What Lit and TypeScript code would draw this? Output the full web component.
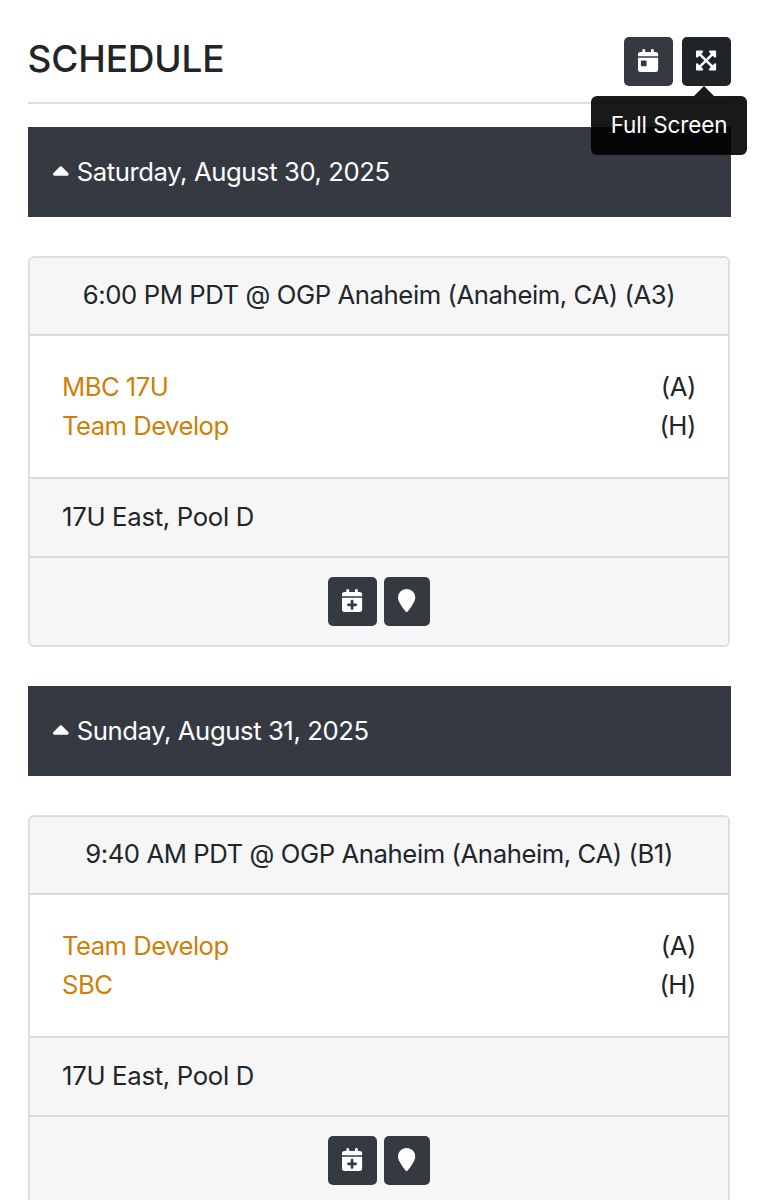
import { LitElement, html, css, svg } from "lit";
import { customElement, property } from "lit/decorators.js";

const ICONS = {
  day: { w: 448, d: "M128 0c17.7 0 32 14.3 32 32V64H288V32c0-17.7 14.3-32 32-32s32 14.3 32 32V64h48c26.5 0 48 21.5 48 48v48H0V112C0 85.5 21.5 64 48 64H96V32c0-17.7 14.3-32 32-32zM0 192H448V464c0 26.5-21.5 48-48 48H48c-26.5 0-48-21.5-48-48V192zm80 64c-8.8 0-16 7.2-16 16v96c0 8.8 7.2 16 16 16h96c8.8 0 16-7.2 16-16V272c0-8.8-7.2-16-16-16H80z" },
  plus: { w: 448, d: "M96 32V64H48C21.5 64 0 85.5 0 112v48H448V112c0-26.5-21.5-48-48-48H352V32c0-17.7-14.3-32-32-32s-32 14.3-32 32V64H160V32c0-17.7-14.3-32-32-32S96 14.3 96 32zM448 192H0V464c0 26.5 21.5 48 48 48H400c26.5 0 48-21.5 48-48V192zM224 242c17 0 30 12 30 28v52h52c16 0 28 13 28 30s-12 30-28 30H254v52c0 16-13 28-30 28s-30-12-30-28V382H142c-16 0-28-13-28-30s12-30 28-30h52V270c0-16 13-28 30-28z" },
  pin: { w: 384, d: "M384 192c0 87.4-117 243-168.3 307.2c-12.3 15.3-35.1 15.3-47.4 0C117 435 0 279.4 0 192C0 86 86 0 192 0S384 86 384 192z" },
  expand: { w: 448, d: "M448 344v112a23.94 23.94 0 0 1-24 24H312c-21.39 0-32.09-25.9-17-41l36.2-36.2L224 295.6 116.77 402.9 153 439c15.09 15.1 4.39 41-17 41H24a23.94 23.94 0 0 1-24-24V344c0-21.4 25.89-32.1 41-17l36.19 36.2L184.46 256 77.18 148.7 41 185c-15.1 15.1-41 4.4-41-17V56a23.94 23.94 0 0 1 24-24h112c21.39 0 32.09 25.9 17 41l-36.2 36.2L224 216.4l107.23-107.3L295 73c-15.09-15.1-4.39-41 17-41h112a23.94 23.94 0 0 1 24 24v112c0 21.4-25.89 32.1-41 17l-36.19-36.2L263.54 256l107.28 107.3L407 327.1c15.1-15.2 41-4.5 41 16.9z" },
  caret: { w: 320, d: "M182.6 137.4c-12.5-12.5-32.8-12.5-45.3 0l-128 128c-9.2 9.2-11.9 22.9-6.9 34.9s16.6 19.8 29.6 19.8H288c12.9 0 24.6-7.8 29.6-19.8s2.2-25.7-6.9-34.9l-128-128z" },
};

const icon = (name: keyof typeof ICONS) =>
  html`<svg class="icon" viewBox="0 0 ${ICONS[name].w} 512" aria-hidden="true">${svg`<path fill="currentColor" d=${ICONS[name].d}></path>`}</svg>`;

const buttonStyles = css`
  .icon { display: block; height: 23px; width: auto; }
  .btn {
    box-sizing: border-box;
    display: flex;
    justify-content: center;
    width: 49px;
    height: 49px;
    margin: 0;
    padding: 12px 0 0;
    border: 0;
    border-radius: 5px;
    background: #343a40;
    color: #fff;
  }
`;

interface Game {
  date: string;
  title: string;
  teams: { name: string; side: string }[];
  pool: string;
}

const GAMES: Game[] = [
  {
    date: "Saturday, August 30, 2025",
    title: "6:00 PM PDT @ OGP Anaheim (Anaheim, CA) (A3)",
    teams: [{ name: "MBC 17U", side: "(A)" }, { name: "Team Develop", side: "(H)" }],
    pool: "17U East, Pool D",
  },
  {
    date: "Sunday, August 31, 2025",
    title: "9:40 AM PDT @ OGP Anaheim (Anaheim, CA) (B1)",
    teams: [{ name: "Team Develop", side: "(A)" }, { name: "SBC", side: "(H)" }],
    pool: "17U East, Pool D",
  },
];

@customElement("schedule-day")
export class ScheduleDay extends LitElement {
  @property({ attribute: false }) game!: Game;

  static styles = [
    buttonStyles,
    css`
      :host { display: block; }
      .date {
        box-sizing: border-box;
        display: flex;
        align-items: center;
        gap: 8px;
        height: 90px;
        margin-bottom: 39px;
        padding-left: 25px;
        background: #353941;
        color: #fff;
        white-space: nowrap;
      }
      .date .icon { height: 25px; margin-top: 1px; }
      .card {
        box-sizing: border-box;
        height: 391px;
        margin-right: 1px;
        border: 2px solid #dedede;
        border-radius: 6px;
        background: #fff;
        overflow: hidden;
      }
      .head, .foot, .actions { box-sizing: border-box; background: #f6f6f6; }
      .head {
        height: 78px;
        padding-top: 18px;
        border-bottom: 2px solid #dadada;
        text-align: center;
        white-space: nowrap;
      }
      .body { box-sizing: border-box; height: 141px; padding: 32px 32px 0; }
      .team { display: flex; justify-content: space-between; }
      .link { color: #cf7f08; text-decoration: none; letter-spacing: -0.55px; }
      .foot { height: 79px; padding: 19px 32px 0; border-top: 2px solid #dadada; letter-spacing: -0.3px; }
      .actions {
        display: flex;
        justify-content: center;
        gap: 7px;
        height: 89px;
        padding-top: 19px;
        border-top: 2px solid #dadada;
      }
      .pin { width: 46px; }
    `,
  ];

  render() {
    const g = this.game;
    return html`
      <div class="date">${icon("caret")}<span>${g.date}</span></div>
      <div class="card">
        <div class="head">${g.title}</div>
        <div class="body">
          ${g.teams.map((t) => html`<div class="team"><a class="link">${t.name}</a><span>${t.side}</span></div>`)}
        </div>
        <div class="foot">${g.pool}</div>
        <div class="actions">
          <button class="btn" aria-label="Add to calendar">${icon("plus")}</button>
          <button class="btn pin" aria-label="Location">${icon("pin")}</button>
        </div>
      </div>
    `;
  }
}

@customElement("app-root")
export class AppRoot extends LitElement {
  static styles = [
    buttonStyles,
    css`
      :host {
        box-sizing: border-box;
        display: block;
        height: 1200px;
        padding: 37px 27px 0 28px;
        overflow: hidden;
        background: #fff;
        color: #212529;
        font: 370 25.7px/38.5px Inter, "Liberation Sans", sans-serif;
        letter-spacing: -0.42px;
      }
      .top {
        box-sizing: border-box;
        display: flex;
        justify-content: space-between;
        height: 67px;
        border-bottom: 2px solid #e0e0e0;
        margin-bottom: 23px;
      }
      .title { margin: 0 0 0 -0.5px; font-size: 37px; font-weight: 480; line-height: 43px; letter-spacing: -0.15px; }
      .tools { display: flex; gap: 9px; }
      .anchor { position: relative; }
      .active { background: #202328; }
      .tip {
        position: absolute;
        z-index: 2;
        top: 59px;
        left: -91px;
        width: 156px;
        height: 59px;
        border-radius: 6px;
        background: rgba(0, 0, 0, 0.9);
        color: #fff;
        font-size: 22.5px;
        letter-spacing: -0.12px;
        line-height: 58px;
        text-align: center;
        white-space: nowrap;
      }
      .tip::before {
        content: "";
        position: absolute;
        left: 103px;
        top: -10px;
        border: solid transparent;
        border-width: 0 10px 10px;
        border-bottom-color: rgba(0, 0, 0, 0.9);
      }
      .days { display: flex; flex-direction: column; gap: 39px; }
    `,
  ];

  render() {
    return html`
      <header class="top">
        <h1 class="title">SCHEDULE</h1>
        <div class="tools">
          <button class="btn" aria-label="Calendar">${icon("day")}</button>
          <div class="anchor">
            <button class="btn active" aria-label="Full Screen">${icon("expand")}</button>
            <div class="tip" role="tooltip">Full Screen</div>
          </div>
        </div>
      </header>
      <main class="days">${GAMES.map((g) => html`<schedule-day .game=${g}></schedule-day>`)}</main>
    `;
  }
}
